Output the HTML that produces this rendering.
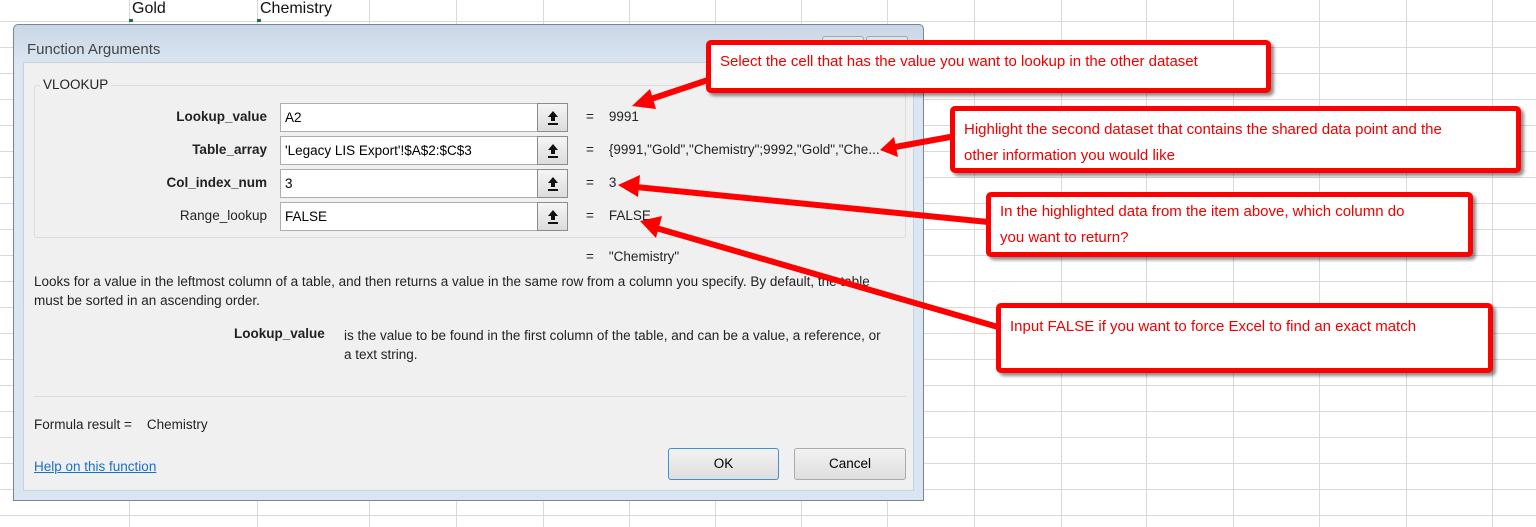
<!DOCTYPE html>
<html><head><meta charset="utf-8"><style>
*{margin:0;padding:0;box-sizing:border-box}
body{width:1536px;height:527px;overflow:hidden;background:#fff;font-family:"Liberation Sans",sans-serif;position:relative}
.a{position:absolute}
.dlg{left:13px;top:24px;width:911px;height:477px;background:linear-gradient(#c9d6e4,#dbe6f2 40px,#d9e5f1);border:1px solid #7a8694;border-radius:5px 5px 0 0}
.inner{left:9px;top:37px;width:891px;height:429px;background:#f0f0f0;border:1px solid #c5d2df}
.t{font-size:13.5px;color:#222;white-space:nowrap}
.lbl{width:236px;text-align:right;font-size:13.5px}
.inp{left:256px;width:288px;height:29px;background:#fff;border:1px solid #abadb3}
.inp span{position:absolute;left:4px;top:6px;font-size:13.5px}
.ub{position:absolute;right:-1px;top:-1px;width:31px;height:29px;border:1px solid #8c8c8c;background:linear-gradient(#f5f5f5,#dcdcdc)}
.ub svg{position:absolute;left:9px;top:6px}
.call{background:#fff;border:5px solid #f00;border-radius:5px;box-shadow:3px 3px 3px rgba(0,0,0,.45);color:#e00;font-size:15px;line-height:26px;padding:4px 9px}
.btn{height:32px;border:1px solid #aaa;border-radius:3px;background:linear-gradient(#f2f2f2,#dedede);text-align:center;line-height:30px;font-size:13.5px}
</style></head><body>
<svg class="a" style="left:0;top:0" width="1536" height="527">
<g stroke="#dadada" stroke-width="1">
<line x1="129.5" y1="0" x2="129.5" y2="527"/><line x1="257.5" y1="0" x2="257.5" y2="527"/><line x1="369.5" y1="0" x2="369.5" y2="527"/><line x1="456.5" y1="0" x2="456.5" y2="527"/><line x1="543.5" y1="0" x2="543.5" y2="527"/><line x1="629.5" y1="0" x2="629.5" y2="527"/><line x1="715.5" y1="0" x2="715.5" y2="527"/><line x1="801.5" y1="0" x2="801.5" y2="527"/><line x1="887.5" y1="0" x2="887.5" y2="527"/><line x1="974.5" y1="0" x2="974.5" y2="527"/><line x1="1061.5" y1="0" x2="1061.5" y2="527"/><line x1="1146.5" y1="0" x2="1146.5" y2="527"/><line x1="1233.5" y1="0" x2="1233.5" y2="527"/><line x1="1319.5" y1="0" x2="1319.5" y2="527"/><line x1="1406.5" y1="0" x2="1406.5" y2="527"/><line x1="1492.5" y1="0" x2="1492.5" y2="527"/>
<line x1="0" y1="21.5" x2="1536" y2="21.5"/><line x1="0" y1="47.5" x2="1536" y2="47.5"/><line x1="0" y1="73.5" x2="1536" y2="73.5"/><line x1="0" y1="99.5" x2="1536" y2="99.5"/><line x1="0" y1="125.5" x2="1536" y2="125.5"/><line x1="0" y1="151.5" x2="1536" y2="151.5"/><line x1="0" y1="177.5" x2="1536" y2="177.5"/><line x1="0" y1="203.5" x2="1536" y2="203.5"/><line x1="0" y1="229.5" x2="1536" y2="229.5"/><line x1="0" y1="255.5" x2="1536" y2="255.5"/><line x1="0" y1="281.5" x2="1536" y2="281.5"/><line x1="0" y1="307.5" x2="1536" y2="307.5"/><line x1="0" y1="333.5" x2="1536" y2="333.5"/><line x1="0" y1="359.5" x2="1536" y2="359.5"/><line x1="0" y1="385.5" x2="1536" y2="385.5"/><line x1="0" y1="411.5" x2="1536" y2="411.5"/><line x1="0" y1="437.5" x2="1536" y2="437.5"/><line x1="0" y1="463.5" x2="1536" y2="463.5"/><line x1="0" y1="489.5" x2="1536" y2="489.5"/><line x1="0" y1="515.5" x2="1536" y2="515.5"/>
</g>
<rect x="129" y="19" width="4" height="3" fill="#217346"/><rect x="257" y="19" width="4" height="3" fill="#217346"/>
</svg>
<div class="a t" style="left:132px;top:0;font-size:16px;color:#111">Gold</div>
<div class="a t" style="left:260px;top:0;font-size:16px;color:#111">Chemistry</div>

<div class="a dlg">
 <div class="a t" style="left:13px;top:16px;font-size:15px;color:#444">Function Arguments</div>
 <div class="a" style="left:808px;top:11px;width:42px;height:14px;border:1px solid #9aa;border-radius:3px;background:#dde6ef"></div>
 <div class="a" style="left:852px;top:11px;width:42px;height:14px;border:1px solid #9aa;border-radius:3px;background:#dde6ef"></div>
 <div class="a inner">
  <div class="a" style="left:10px;top:22px;width:872px;height:153px;border:1px solid #dcdcdc;border-radius:3px"></div>
  <div class="a t" style="left:16px;top:14px;background:#f0f0f0;padding:0 3px">VLOOKUP</div>

  <div class="a t lbl" style="left:7px;top:46px;font-weight:bold">Lookup_value</div>
  <div class="a inp" style="top:40px"><span>A2</span><div class="ub"><svg width="12" height="16"><path d="M6 1 L11 7 L8 7 L8 11 L4 11 L4 7 L1 7 Z" fill="#111"/><rect x="1" y="13" width="10" height="2" fill="#111"/></svg></div></div>
  <div class="a t" style="left:562px;top:46px">=&nbsp;&nbsp;&nbsp;&nbsp;9991</div>

  <div class="a t lbl" style="left:7px;top:79px;font-weight:bold">Table_array</div>
  <div class="a inp" style="top:73px"><span>'Legacy LIS Export'!$A$2:$C$3</span><div class="ub"><svg width="12" height="16"><path d="M6 1 L11 7 L8 7 L8 11 L4 11 L4 7 L1 7 Z" fill="#111"/><rect x="1" y="13" width="10" height="2" fill="#111"/></svg></div></div>
  <div class="a t" style="left:562px;top:79px">=&nbsp;&nbsp;&nbsp;&nbsp;{9991,"Gold","Chemistry";9992,"Gold","Che...</div>

  <div class="a t lbl" style="left:7px;top:112px;font-weight:bold">Col_index_num</div>
  <div class="a inp" style="top:106px"><span>3</span><div class="ub"><svg width="12" height="16"><path d="M6 1 L11 7 L8 7 L8 11 L4 11 L4 7 L1 7 Z" fill="#111"/><rect x="1" y="13" width="10" height="2" fill="#111"/></svg></div></div>
  <div class="a t" style="left:562px;top:112px">=&nbsp;&nbsp;&nbsp;&nbsp;3</div>

  <div class="a t lbl" style="left:7px;top:145px">Range_lookup</div>
  <div class="a inp" style="top:139px"><span>FALSE</span><div class="ub"><svg width="12" height="16"><path d="M6 1 L11 7 L8 7 L8 11 L4 11 L4 7 L1 7 Z" fill="#111"/><rect x="1" y="13" width="10" height="2" fill="#111"/></svg></div></div>
  <div class="a t" style="left:562px;top:145px">=&nbsp;&nbsp;&nbsp;&nbsp;FALSE</div>

  <div class="a t" style="left:562px;top:186px">=&nbsp;&nbsp;&nbsp;&nbsp;"Chemistry"</div>
  <div class="a t" style="left:10px;top:209px;line-height:19px">Looks for a value in the leftmost column of a table, and then returns a value in the same row from a column you specify. By default, the table<br>must be sorted in an ascending order.</div>
  <div class="a t" style="left:210px;top:263px;font-weight:bold">Lookup_value</div>
  <div class="a t" style="left:320px;top:263px;line-height:19px">is the value to be found in the first column of the table, and can be a value, a reference, or<br>a text string.</div>
  <div class="a" style="left:10px;top:333px;width:872px;height:1px;background:#dcdcdc"></div>
  <div class="a t" style="left:10px;top:354px">Formula result =&nbsp;&nbsp;&nbsp;&nbsp;Chemistry</div>
  <div class="a t" style="left:10px;top:396px;color:#1a6fc9;text-decoration:underline">Help on this function</div>
  <div class="a btn" style="left:644px;top:385px;width:111px;border-color:#3c8fd8">OK</div>
  <div class="a btn" style="left:770px;top:385px;width:112px">Cancel</div>
 </div>
</div>

<div class="a call" style="left:706px;top:40px;width:565px;height:53px">Select the cell that has the value you want to lookup in the other dataset</div>
<div class="a call" style="left:950px;top:106px;width:571px;height:67px;padding:6px 20px 0 9px">Highlight the second dataset that contains the shared data point and the<br>other information you would like</div>
<div class="a call" style="left:986px;top:192px;width:487px;height:65px;padding:2px 20px 0 9px">In the highlighted data from the item above, which column do<br>you want to return?</div>
<div class="a call" style="left:996px;top:303px;width:497px;height:70px;padding-top:6px">Input FALSE if you want to force Excel to find an exact match</div>

<svg class="a" style="left:0;top:0" width="1536" height="527">
<g fill="#f00" stroke="#f00" stroke-width="6" stroke-linecap="round">
<line x1="708" y1="80" x2="648" y2="100"/>
<line x1="950" y1="137" x2="895" y2="147"/>
<line x1="988" y1="222" x2="636" y2="187"/>
<line x1="998" y1="327" x2="656" y2="228"/>
</g>
<g fill="#f00">
<path d="M632 106 L650 89 L656 109 Z"/>
<path d="M880 150 L894 137 L898 157 Z"/>
<path d="M618 185 L640 175 L638 197 Z"/>
<path d="M640 221 L662 216 L656 238 Z"/>
</g>
</svg>
</body></html>
